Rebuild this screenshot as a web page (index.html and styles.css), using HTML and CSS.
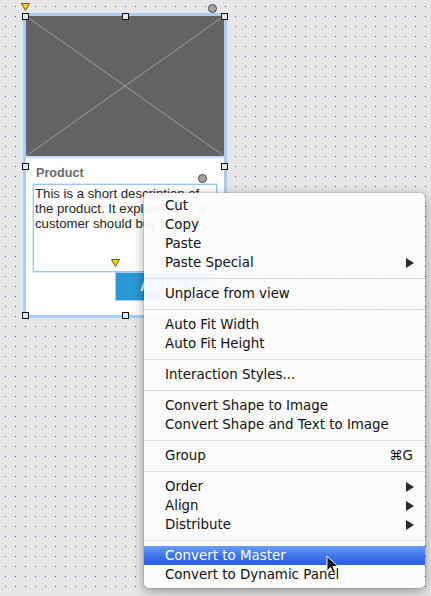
FILE: index.html
```html
<!DOCTYPE html>
<html>
<head>
<meta charset="utf-8">
<link rel="stylesheet" href="styles.css">
</head>
<body>
<div class="canvas">
  <svg class="grid" width="431" height="596">
    <defs>
      <pattern id="dots" x="0" y="0" width="10" height="10" patternUnits="userSpaceOnUse">
        <rect x="5" y="6" width="1" height="1" fill="#4152d8"/>
      </pattern>
    </defs>
    <rect x="0" y="0" width="431" height="596" fill="url(#dots)"/>
  </svg>

  <div class="widget">
    <div class="img-ph">
      <svg class="xlines" viewBox="0 0 198 140" preserveAspectRatio="none" width="198" height="140">
        <line x1="0" y1="0" x2="198" y2="140" stroke="#9b9b9b" stroke-width="1"/>
        <line x1="198" y1="0" x2="0" y2="140" stroke="#9b9b9b" stroke-width="1"/>
      </svg>
    </div>
    <div class="card-body">
      <div class="label">Product</div>
      <div class="desc">This is a short description of<br>the product. It explains why a<br>customer should buy it.</div>
      <div class="btn">Add to Cart</div>
    </div>
  </div>

  <div class="handle h1"></div>
  <div class="handle h2"></div>
  <div class="handle h3"></div>
  <div class="handle h4"></div>
  <div class="handle h5"></div>
  <div class="handle h6"></div>
  <div class="handle h7"></div>

  <svg class="tri t1" width="9" height="8" viewBox="0 0 9 8"><polygon points="0.5,0.5 8.5,0.5 4.5,7.5" fill="#f4cf1c" stroke="#6b5a10" stroke-width="1"/></svg>
  <svg class="tri t2" width="9" height="8" viewBox="0 0 9 8"><polygon points="0.5,0.5 8.5,0.5 4.5,7.5" fill="#f4cf1c" stroke="#6b5a10" stroke-width="1"/></svg>
  <div class="circ c1"></div>
  <div class="circ c2"></div>

  <div class="menu">
    <div class="item">Cut</div>
    <div class="item">Copy</div>
    <div class="item">Paste</div>
    <div class="item"><span>Paste Special</span><svg class="arrow" width="8" height="10" viewBox="0 0 8 10"><polygon points="0,0 8,5 0,10" fill="#2b2b2b"/></svg></div>
    <div class="sep"></div>
    <div class="item">Unplace from view</div>
    <div class="sep"></div>
    <div class="item">Auto Fit Width</div>
    <div class="item">Auto Fit Height</div>
    <div class="sep"></div>
    <div class="item">Interaction Styles...</div>
    <div class="sep"></div>
    <div class="item">Convert Shape to Image</div>
    <div class="item">Convert Shape and Text to Image</div>
    <div class="sep"></div>
    <div class="item"><span>Group</span><span class="key">⌘G</span></div>
    <div class="sep"></div>
    <div class="item"><span>Order</span><svg class="arrow" width="8" height="10" viewBox="0 0 8 10"><polygon points="0,0 8,5 0,10" fill="#2b2b2b"/></svg></div>
    <div class="item"><span>Align</span><svg class="arrow" width="8" height="10" viewBox="0 0 8 10"><polygon points="0,0 8,5 0,10" fill="#2b2b2b"/></svg></div>
    <div class="item"><span>Distribute</span><svg class="arrow" width="8" height="10" viewBox="0 0 8 10"><polygon points="0,0 8,5 0,10" fill="#2b2b2b"/></svg></div>
    <div class="sep"></div>
    <div class="item active">Convert to Master</div>
    <div class="item">Convert to Dynamic Panel</div>
  </div>

  <svg class="cursor" width="13" height="20" viewBox="0 0 13 20">
    <path d="M1,1 L1,16 L4.5,12.5 L7,18.5 L9.5,17.5 L7,11.5 L12,11.5 Z" fill="#111" stroke="#fff" stroke-width="1" stroke-linejoin="round"/>
  </svg>
</div>
</body>
</html>
```

FILE: styles.css
```css
html, body {
  margin: 0;
  padding: 0;
}
body {
  width: 431px;
  height: 596px;
  overflow: hidden;
  background-color: #e7e7e7;
}
.canvas {
  position: relative;
  width: 431px;
  height: 596px;
}
.grid {
  position: absolute;
  left: 0;
  top: 0;
  display: block;
}
.widget {
  position: absolute;
  left: 23px;
  top: 13px;
  width: 204px;
  height: 305px;
  box-sizing: border-box;
  border: 3px solid #a9cdf4;
  background: #fff;
  display: flex;
  flex-direction: column;
}
.img-ph {
  height: 140px;
  background: #636363;
  border-bottom: 2px solid #c4ddf8;
  flex: none;
}
.xlines {
  display: block;
}
.card-body {
  flex: 1;
  padding: 8px 0 0 7px;
  display: flex;
  flex-direction: column;
  align-items: flex-start;
}
.label {
  font-family: "Liberation Sans", Arial, sans-serif;
  font-weight: bold;
  font-size: 12.6px;
  line-height: 15px;
  color: #6b6b6b;
  margin-left: 3px;
  margin-bottom: 3px;
}
.desc {
  box-sizing: border-box;
  width: 184px;
  height: 88px;
  border: 1px solid #9cc5ef;
  box-shadow: 0 0 0 1px #dcebfb;
  padding: 1px 1px;
  font-family: "Liberation Sans", Arial, sans-serif;
  font-size: 13.2px;
  line-height: 15px;
  color: #1e1e1e;
  background: #fff;
}
.btn {
  margin-left: 82px;
  box-sizing: border-box;
  width: 101px;
  height: 29px;
  background: #2898d6;
  border: 1px solid #a6d0f1;
  color: #fff;
  font-family: "Liberation Sans", Arial, sans-serif;
  font-weight: bold;
  font-size: 14px;
  line-height: 27px;
  padding-left: 24px;
  white-space: nowrap;
  overflow: hidden;
}
.handle {
  position: absolute;
  width: 7px;
  height: 7px;
  box-sizing: border-box;
  border: 1px solid #111;
  background: #dde8f5;
}
.h1 { left: 22px; top: 13px; }
.h2 { left: 122px; top: 13px; }
.h3 { left: 221px; top: 13px; }
.h4 { left: 22px; top: 163px; }
.h5 { left: 221px; top: 163px; }
.h6 { left: 22px; top: 312px; }
.h7 { left: 122px; top: 312px; }
.tri {
  position: absolute;
  display: block;
}
.t1 { left: 21px; top: 3px; }
.t2 { left: 111px; top: 259px; }
.circ {
  position: absolute;
  width: 9px;
  height: 9px;
  box-sizing: border-box;
  border-radius: 50%;
  border: 1px solid #4a4a4a;
  background: #a3a3a3;
}
.c1 { left: 208px; top: 4px; }
.c2 { left: 198px; top: 174px; }

.menu {
  position: absolute;
  left: 144px;
  top: 193px;
  width: 281px;
  box-sizing: border-box;
  padding: 3px 0 4px 0;
  background: rgba(252, 252, 252, 0.95);
  border-radius: 5px;
  box-shadow: 0 3px 12px rgba(0, 0, 0, 0.38), 0 0 0 1px rgba(0, 0, 0, 0.08);
  font-family: "DejaVu Sans", Verdana, sans-serif;
  font-size: 13.4px;
  color: #111;
}
.item {
  height: 19px;
  line-height: 19px;
  padding: 0 11px 0 21px;
  display: flex;
  align-items: center;
  justify-content: space-between;
  white-space: nowrap;
}
.item.active {
  background: linear-gradient(#6b9cf6, #3d72ea 55%, #2a60e4);
  color: #fff;
}
.sep {
  height: 12px;
  display: flex;
  align-items: center;
}
.sep::before {
  content: "";
  display: block;
  width: 100%;
  height: 1px;
  background: #dedede;
}
.arrow {
  display: block;
  flex: none;
}
.key {
  padding-right: 1px;
}
.cursor {
  position: absolute;
  left: 326px;
  top: 555px;
  display: block;
}
```
